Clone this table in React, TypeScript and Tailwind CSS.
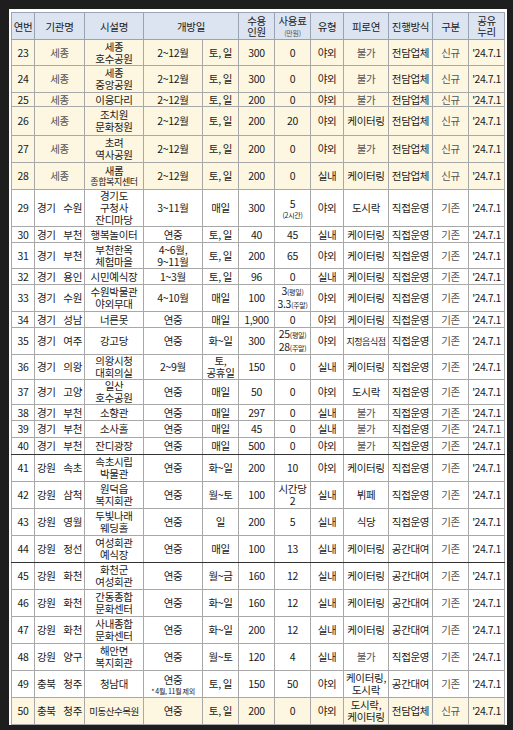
import React from 'react';

type Cell = React.ReactNode;

interface Row {
  no: number;
  org: [string, string?];
  name: Cell;
  period: Cell;
  days: Cell;
  cap: string;
  fee: Cell;
  type: string;
  party: Cell;
  method: string;
  kind: string;
  h: string;
  yellow?: boolean;
  darkBottom?: boolean;
}

const Small: React.FC<{ children: React.ReactNode }> = ({ children }) => (
  <span className="text-[7px] tracking-[-0.3px]">{children}</span>
);

const rows: Row[] = [
  { no: 23, org: ['세종'], name: '세종\n호수공원', period: '2~12월', days: '토, 일', cap: '300', fee: '0', type: '야외', party: '불가', method: '전담업체', kind: '신규', h: 'h-[26px]', yellow: true },
  { no: 24, org: ['세종'], name: '세종\n중앙공원', period: '2~12월', days: '토, 일', cap: '300', fee: '0', type: '야외', party: '불가', method: '전담업체', kind: '신규', h: 'h-[27px]', yellow: true },
  { no: 25, org: ['세종'], name: '이응다리', period: '2~12월', days: '토, 일', cap: '200', fee: '0', type: '야외', party: '불가', method: '전담업체', kind: '신규', h: 'h-[14px]', yellow: true },
  { no: 26, org: ['세종'], name: '조치원\n문화정원', period: '2~12월', days: '토, 일', cap: '200', fee: '20', type: '야외', party: '케이터링', method: '전담업체', kind: '신규', h: 'h-[29px]', yellow: true },
  { no: 27, org: ['세종'], name: '초려\n역사공원', period: '2~12월', days: '토, 일', cap: '200', fee: '0', type: '야외', party: '불가', method: '전담업체', kind: '신규', h: 'h-[27px]', yellow: true },
  {
    no: 28, org: ['세종'],
    name: (<><div className="leading-[11px]">새롬</div><div className="text-[9px] leading-[11px] tracking-[-0.4px]">종합복지센터</div></>),
    period: '2~12월', days: '토, 일', cap: '200', fee: '0', type: '실내', party: '케이터링', method: '전담업체', kind: '신규', h: 'h-[27px]', yellow: true,
  },
  {
    no: 29, org: ['경기', '수원'], name: '경기도\n구청사\n잔디마당', period: '3~11월', days: '매일', cap: '300',
    fee: (<><div>5</div><div className="leading-[8px]"><Small>(2시간)</Small></div></>),
    type: '야외', party: '도시락', method: '직접운영', kind: '기존', h: 'h-[37px]',
  },
  { no: 30, org: ['경기', '부천'], name: '행복놀이터', period: '연중', days: '토, 일', cap: '40', fee: '45', type: '실내', party: '케이터링', method: '직접운영', kind: '기존', h: 'h-[16px]' },
  { no: 31, org: ['경기', '부천'], name: '부천한옥\n체험마을', period: '4~6월,\n9~11월', days: '토, 일', cap: '200', fee: '65', type: '야외', party: '케이터링', method: '직접운영', kind: '기존', h: 'h-[26px]' },
  { no: 32, org: ['경기', '용인'], name: '시민예식장', period: '1~3월', days: '토, 일', cap: '96', fee: '0', type: '실내', party: '케이터링', method: '직접운영', kind: '기존', h: 'h-[16px]' },
  {
    no: 33, org: ['경기', '수원'], name: '수원박물관\n야외무대', period: '4~10월', days: '매일', cap: '100',
    fee: (<><div className="leading-[12px]">3<Small>(평일)</Small></div><div className="leading-[12px]">3.3<Small>(주말)</Small></div></>),
    type: '야외', party: '케이터링', method: '직접운영', kind: '기존', h: 'h-[27px]',
  },
  { no: 34, org: ['경기', '성남'], name: '너른못', period: '연중', days: '매일', cap: '1,900', fee: '0', type: '야외', party: '케이터링', method: '직접운영', kind: '기존', h: 'h-[16px]' },
  {
    no: 35, org: ['경기', '여주'], name: '강고당', period: '연중', days: '화~일', cap: '300',
    fee: (<><div className="leading-[12px]">25<Small>(평일)</Small></div><div className="leading-[12px]">28<Small>(주말)</Small></div></>),
    type: '야외', party: (<span className="text-[9px] tracking-[-0.5px]">지정음식점</span>), method: '직접운영', kind: '기존', h: 'h-[26px]',
  },
  { no: 36, org: ['경기', '의왕'], name: '의왕시청\n대회의실', period: '2~9월', days: '토,\n공휴일', cap: '150', fee: '0', type: '실내', party: '케이터링', method: '직접운영', kind: '기존', h: 'h-[24px]' },
  { no: 37, org: ['경기', '고양'], name: '일산\n호수공원', period: '연중', days: '매일', cap: '50', fee: '0', type: '야외', party: '도시락', method: '직접운영', kind: '기존', h: 'h-[24px]' },
  { no: 38, org: ['경기', '부천'], name: '소향관', period: '연중', days: '매일', cap: '297', fee: '0', type: '실내', party: '불가', method: '직접운영', kind: '기존', h: 'h-[16px]' },
  { no: 39, org: ['경기', '부천'], name: '소사홀', period: '연중', days: '매일', cap: '45', fee: '0', type: '실내', party: '불가', method: '직접운영', kind: '기존', h: 'h-[17px]' },
  { no: 40, org: ['경기', '부천'], name: '잔디광장', period: '연중', days: '매일', cap: '500', fee: '0', type: '야외', party: '불가', method: '직접운영', kind: '기존', h: 'h-[17px]', darkBottom: true },
  { no: 41, org: ['강원', '속초'], name: '속초시립\n박물관', period: '연중', days: '화~일', cap: '200', fee: '10', type: '야외', party: '케이터링', method: '직접운영', kind: '기존', h: 'h-[27px]' },
  { no: 42, org: ['강원', '삼척'], name: '원덕읍\n복지회관', period: '연중', days: '월~토', cap: '100', fee: '시간당\n2', type: '실내', party: '뷔페', method: '직접운영', kind: '기존', h: 'h-[27px]' },
  { no: 43, org: ['강원', '영월'], name: '두빛나래\n웨딩홀', period: '연중', days: '일', cap: '200', fee: '5', type: '실내', party: '식당', method: '직접운영', kind: '기존', h: 'h-[27px]' },
  { no: 44, org: ['강원', '정선'], name: '여성회관\n예식장', period: '연중', days: '매일', cap: '100', fee: '13', type: '실내', party: '케이터링', method: '공간대여', kind: '기존', h: 'h-[27px]', darkBottom: true },
  { no: 45, org: ['강원', '화천'], name: '화천군\n여성회관', period: '연중', days: '월~금', cap: '160', fee: '12', type: '실내', party: '케이터링', method: '공간대여', kind: '기존', h: 'h-[27px]' },
  { no: 46, org: ['강원', '화천'], name: '간동종합\n문화센터', period: '연중', days: '화~일', cap: '160', fee: '12', type: '실내', party: '케이터링', method: '공간대여', kind: '기존', h: 'h-[27px]' },
  { no: 47, org: ['강원', '화천'], name: '사내종합\n문화센터', period: '연중', days: '화~일', cap: '200', fee: '12', type: '실내', party: '케이터링', method: '공간대여', kind: '기존', h: 'h-[27px]' },
  { no: 48, org: ['강원', '양구'], name: '해안면\n복지회관', period: '연중', days: '월~토', cap: '120', fee: '4', type: '실내', party: '불가', method: '직접운영', kind: '기존', h: 'h-[27px]' },
  {
    no: 49, org: ['충북', '청주'], name: '청남대',
    period: (<><div>연중</div><div className="leading-[8px]"><Small>* 4월, 11월 제외</Small></div></>),
    days: '토, 일', cap: '150', fee: '50', type: '야외', party: '케이터링,\n도시락', method: '공간대여', kind: '기존', h: 'h-[27px]',
  },
  {
    no: 50, org: ['충북', '청주'], name: (<span className="text-[9.5px] tracking-[-0.5px]">미동산수목원</span>),
    period: '연중', days: '토, 일', cap: '200', fee: '0', type: '야외', party: '도시락,\n케이터링', method: '전담업체', kind: '신규', h: 'h-[27px]', yellow: true,
  },
];

const headers: { label: Cell; span?: number }[] = [
  { label: '연번' },
  { label: '기관명' },
  { label: '시설명' },
  { label: '개방일', span: 2 },
  { label: '수용\n인원' },
  { label: (<><div className="leading-[12px]">사용료</div><div className="leading-[9px] text-[#555]"><Small>(만원)</Small></div></>) },
  { label: '유형' },
  { label: '피로연' },
  { label: '진행방식' },
  { label: '구분' },
  { label: '공유\n누리' },
];

const widths = ['w-[23px]', 'w-[50px]', 'w-[59px]', 'w-[59px]', 'w-[36px]', 'w-[36px]', 'w-[36px]', 'w-[33px]', 'w-[45px]', 'w-[44px]', 'w-[36px]', 'w-[36px]'];

export default function App() {
  return (
    <div className="w-[513px] h-[730px] bg-[#1e1e1e] pt-[9px] pl-[9px]">
      <div className="w-[498px] bg-white pt-[3px] pl-[2px] pr-[3px]">
        <table className="w-[493px] table-fixed border-collapse border border-[#8a8a8a] font-['Noto_Sans_CJK_KR',sans-serif] text-[10.5px] leading-[12px] tracking-[-0.3px] text-[#1a1a1a]">
          <colgroup>
            {widths.map((w, i) => (
              <col key={i} className={w} />
            ))}
          </colgroup>
          <thead>
            <tr className="h-[27px] bg-[#dce4f2]">
              {headers.map((hd, i) => (
                <th
                  key={i}
                  colSpan={hd.span}
                  className="border border-[#9aa3b3] p-0 text-center align-middle font-normal whitespace-pre-line leading-[11px]"
                >
                  {hd.label}
                </th>
              ))}
            </tr>
          </thead>
          <tbody>
            {rows.map((r) => {
              const cell = `border border-[#a8a8a8] p-0 text-center align-middle whitespace-pre-line ${
                r.darkBottom ? 'border-b-[#333]' : ''
              }`;
              return (
                <tr key={r.no} className={`${r.h} ${r.yellow ? 'bg-[#fdf7e1]' : 'bg-white'}`}>
                  <td className={cell}>{r.no}</td>
                  <td className={cell}>
                    {r.org[1] ? (
                      <div className="flex justify-between px-[2px]">
                        <span>{r.org[0]}</span>
                        <span>{r.org[1]}</span>
                      </div>
                    ) : (
                      <span className="text-[#555]">{r.org[0]}</span>
                    )}
                  </td>
                  <td className={cell}>{r.name}</td>
                  <td className={cell}>{r.period}</td>
                  <td className={cell}>{r.days}</td>
                  <td className={cell}>{r.cap}</td>
                  <td className={cell}>{r.fee}</td>
                  <td className={cell}>{r.type}</td>
                  <td className={`${cell} ${r.party === '불가' ? 'text-[#555]' : ''}`}>{r.party}</td>
                  <td className={cell}>{r.method}</td>
                  <td className={`${cell} text-[#555]`}>{r.kind}</td>
                  <td className={`${cell} tracking-[-0.5px]`}>'24.7.1</td>
                </tr>
              );
            })}
          </tbody>
        </table>
      </div>
    </div>
  );
}
